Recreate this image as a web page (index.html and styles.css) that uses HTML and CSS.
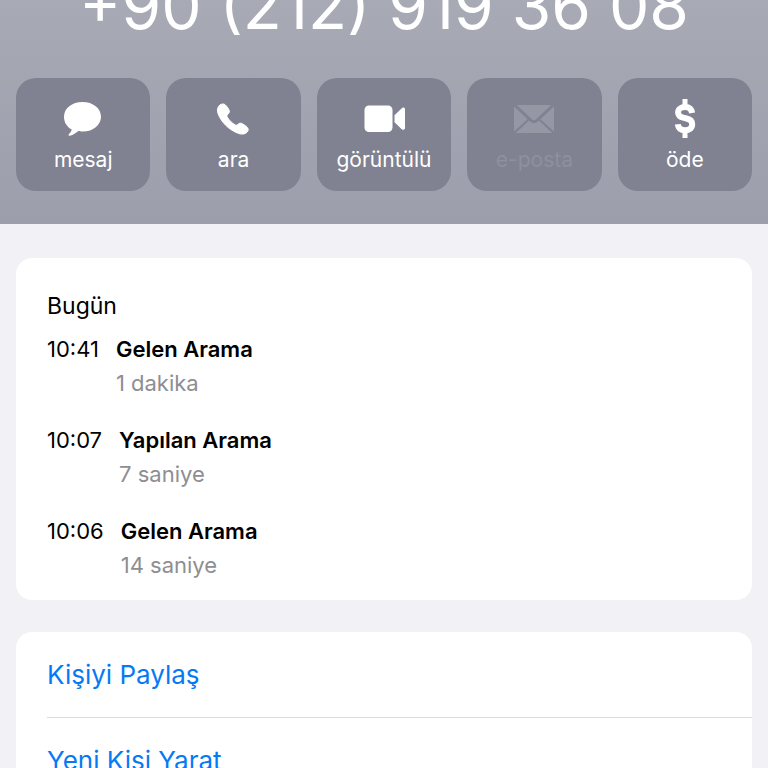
FILE: index.html
```html
<!DOCTYPE html>
<html lang="tr">
<head>
<meta charset="utf-8">
<meta name="viewport" content="width=device-width, initial-scale=1">
<title>+90 (212) 919 36 08</title>
<link rel="stylesheet" href="styles.css">
</head>
<body>
<header class="hero">
  <h1 class="number">+90 (212) 919 36 08</h1>
  <div class="actions">
    <button class="action" type="button">
      <svg class="icon" viewBox="0 0 44 40" aria-hidden="true"><path d="M21.500 3C32 3 40 9.300 40 17.700S32 32.500 22 32.500C20 32.500 18.500 32.400 17.300 32.100C15 34 11 36.800 8.500 36.700C7.200 36.600 7.300 35.500 8.200 34.700C9.500 33.400 10.400 32.100 10.700 30.400C6 27.800 3 23.500 3 17.700C3 9.300 11 3 21.500 3Z"/></svg>
      <span class="label">mesaj</span>
    </button>
    <button class="action" type="button">
      <svg class="icon" viewBox="0 0 44 40" aria-hidden="true"><path transform="translate(-1.500 -.500)" stroke="currentColor" stroke-width="1" d="M9.200 6.600C11 5.300 13.100 5 14.600 6.200C16.200 7.500 17.700 9.700 18.500 11.400C19.200 13 18.800 14.300 17.600 15.500C16.400 16.700 16.100 17.500 16.900 18.800C18.700 21.800 21.400 24.400 24.400 26.300C25.700 27.100 26.500 26.700 27.600 25.700C28.900 24.500 30.200 24.300 31.800 25.200C33.600 26.200 35.600 27.600 36.900 29C38.200 30.500 37.800 32.500 36.500 33.700C34 36.100 30.500 36 27 34.600C17.800 30.800 10.500 23.300 7.500 15C6.400 11.800 6.900 8.900 9.200 6.600Z"/></svg>
      <span class="label">ara</span>
    </button>
    <button class="action" type="button">
      <svg class="icon" viewBox="0 0 44 40" aria-hidden="true"><rect x="2.500" y="6.500" width="28" height="26.500" rx="4.500"/><path d="M32.500 16.300L39.500 9.400C41 8 43 8.400 43 10.300V29.100C43 31 41 31.400 39.500 30L32.500 23.200Z"/></svg>
      <span class="label">görüntülü</span>
    </button>
    <button class="action" type="button" disabled>
      <svg class="icon" viewBox="0 0 44 40" aria-hidden="true"><path d="M4.800 6H39.200L24.200 20.300Q22 22.300 19.800 20.300Z"/><path d="M2 7.500L15.600 20.200L2 32.500Z"/><path d="M42 7.500L28.400 20.200L42 32.500Z"/><path d="M3.800 34L17 21.600L18.400 22.800Q22 25.600 25.600 22.800L27 21.600L40.200 34Z"/></svg>
      <span class="label">e-posta</span>
    </button>
    <button class="action" type="button">
      <svg class="icon icon-line" viewBox="0 0 44 40" aria-hidden="true"><path class="bar" d="M22 0V8M22 31V39"/><path d="M29.100 14C28.600 10.300 26.100 8 22.200 8C17.900 8 15.100 10.300 15.100 13.400C15.100 16.400 17.200 18 21 18.900L23.500 19.500C27.400 20.400 29.200 22.200 29.200 25.300C29.200 28.900 26.500 31.200 22.200 31.200C17.700 31.200 15.200 29 14.800 25.200"/></svg>
      <span class="label">öde</span>
    </button>
  </div>
</header>
<main class="content">
  <section class="card history">
    <h2 class="day">Bugün</h2>
    <ul class="calls">
      <li class="call">
        <time class="time">10:41</time>
        <div><div class="kind">Gelen Arama</div><div class="duration">1 dakika</div></div>
      </li>
      <li class="call">
        <time class="time">10:07</time>
        <div><div class="kind">Yapılan Arama</div><div class="duration">7 saniye</div></div>
      </li>
      <li class="call">
        <time class="time">10:06</time>
        <div><div class="kind">Gelen Arama</div><div class="duration">14 saniye</div></div>
      </li>
    </ul>
  </section>
  <nav class="card links">
    <a class="link" href="#share">Kişiyi Paylaş</a>
    <a class="link" href="#create">Yeni Kişi Yarat</a>
  </nav>
</main>
</body>
</html>
```
FILE: styles.css
```css
* { box-sizing: border-box; }

body {
  margin: 0;
  height: 100vh;
  overflow: hidden;
  background: #f2f1f6;
  color: #000;
  font-family: Inter, "Liberation Sans", sans-serif;
  font-size: 22px;
  line-height: 34px;
}

.hero {
  margin-top: -30px;
  padding: 0 16px 33px;
  background: linear-gradient(#a9abb6, #9c9eac);
}

.number {
  margin: 0 0 36px;
  color: #fff;
  font-size: 64px;
  font-weight: 400;
  line-height: 72px;
  text-align: center;
  white-space: nowrap;
}

.actions {
  display: grid;
  grid-template-columns: repeat(5, 1fr);
  gap: 16px;
}

.action {
  display: flex;
  flex-direction: column;
  align-items: center;
  gap: 8px;
  min-width: 0;
  padding: 21px 0 18px;
  border: 0;
  border-radius: 20px;
  background: #808291;
  color: #fff;
  font: inherit;
  font-size: 21px;
  line-height: 26px;
}

.icon {
  display: block;
  width: 44px;
  height: 40px;
  fill: currentColor;
}

.icon-line {
  fill: none;
  stroke: currentColor;
  stroke-width: 6;
}

.bar { stroke-width: 5; }

.action:disabled { color: #9597a4; }
.action:disabled .label { color: #8e909e; }

.content {
  display: flex;
  flex-direction: column;
  gap: 32px;
  padding: 34px 16px;
}

.card {
  border-radius: 16px;
  background: #fff;
}

.history { padding: 31px 31px 18px; }

.day {
  margin: 0 0 9px;
  font-size: 23px;
  font-weight: 400;
}

.calls {
  display: grid;
  gap: 23px;
  margin: 0;
  padding: 0;
  list-style: none;
}

.call {
  display: flex;
  gap: 17px;
}

.kind { font-weight: 600; }
.duration { color: #8e8e92; }

.links { padding-left: 31px; }

.link {
  display: block;
  padding: 26px 0 25px;
  color: #067af5;
  font-size: 26px;
  text-decoration: none;
}

.link + .link { border-top: 1px solid #dcdcdf; }
```
